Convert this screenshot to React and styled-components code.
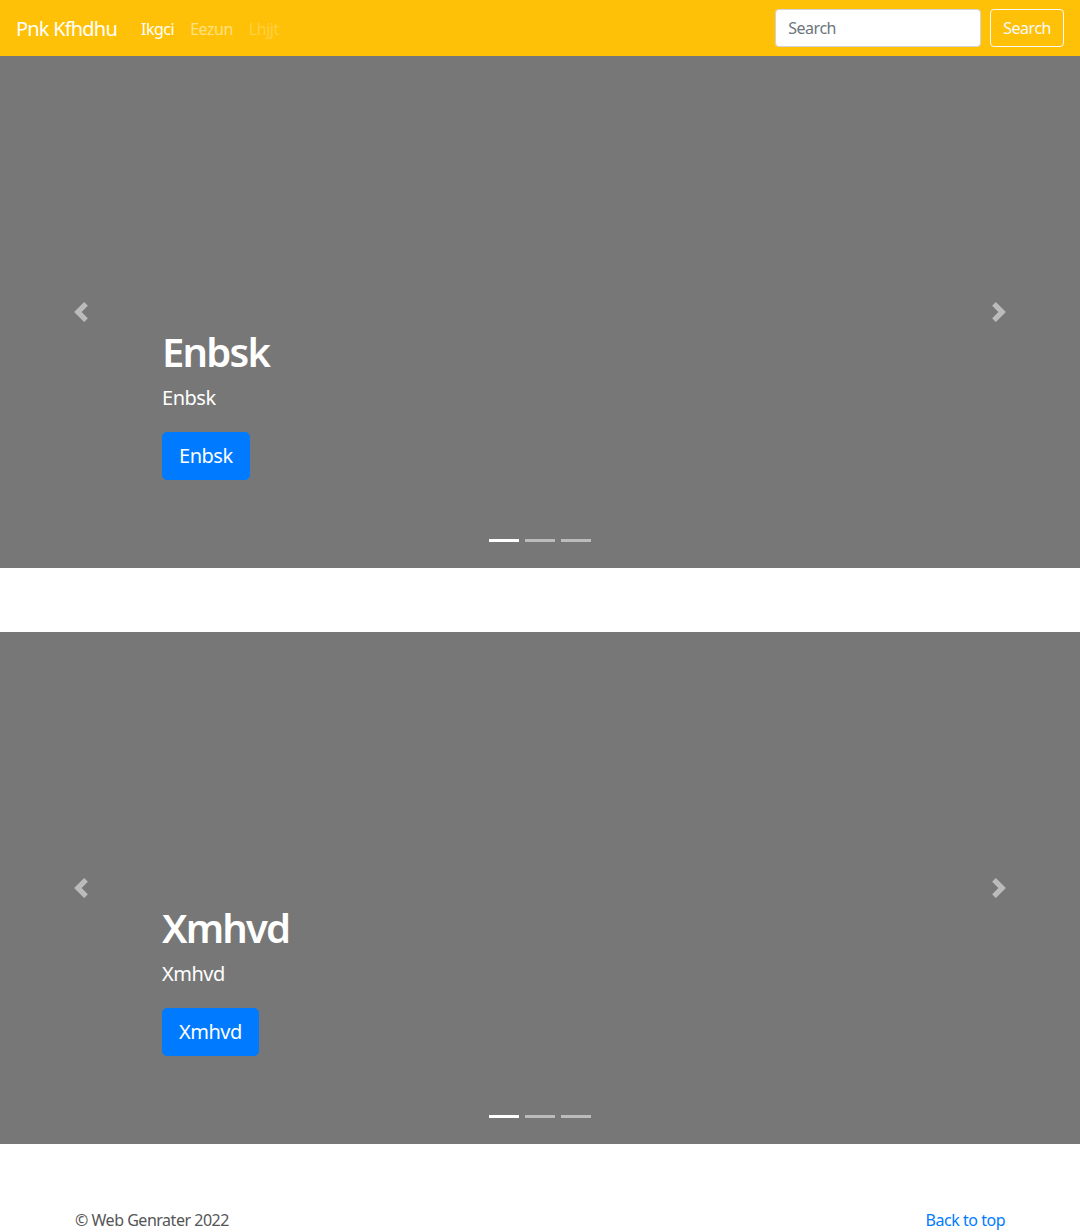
import styled, { createGlobalStyle } from "styled-components";

const GlobalStyle = createGlobalStyle`
  body {
    margin: 0;
    font-family: "Noto Sans", "Open Sans", sans-serif;
    font-size: 16px;
    line-height: 1.5;
    letter-spacing: -0.03em;
    color: #212529;
    background: #fff;
  }
  * { box-sizing: border-box; }
`;

const Navbar = styled.nav`
  height: 56px;
  display: flex;
  align-items: center;
  padding: 9px 16px 7px;
  background: #ffc107;
`;

const Brand = styled.a`
  font-size: 20px;
  line-height: 30px;
  letter-spacing: -0.04em;
  color: #fff;
  margin-right: 16px;
  text-decoration: none;
`;

const NavLinks = styled.ul`
  display: flex;
  list-style: none;
  margin: 0;
  padding: 0;
  flex: 1;
`;

const NavLink = styled.a`
  display: block;
  padding: 8px;
  font-size: 16px;
  text-decoration: none;
  color: ${(p) =>
    p.$state === "active"
      ? "#fff"
      : p.$state === "disabled"
      ? "rgba(255,255,255,.25)"
      : "rgba(255,255,255,.5)"};
`;

const SearchForm = styled.form`
  display: flex;
  align-items: center;
  gap: 9px;
  margin-top: -2px;
`;

const SearchInput = styled.input`
  width: 206px;
  height: 38px;
  padding: 6px 12px;
  font: inherit;
  font-size: 16px;
  letter-spacing: -0.03em;
  color: #495057;
  border: 1px solid #ced4da;
  border-radius: 4px;
  background: #fff;
  &::placeholder { color: #6c757d; }
`;

const OutlineButton = styled.button`
  height: 38px;
  padding: 6px 12px;
  font: inherit;
  font-size: 16px;
  letter-spacing: -0.03em;
  color: #f8f9fa;
  background: transparent;
  border: 1px solid #f8f9fa;
  border-radius: 4px;
`;

const Carousel = styled.section`
  height: 512px;
  margin-bottom: 64px;
  background: #777;
  display: grid;
  grid-template-columns: 15% 1fr 15%;
  grid-template-rows: 1fr auto;
`;

const Control = styled.a`
  grid-row: 1 / 3;
  grid-column: ${(p) => (p.$side === "prev" ? 1 : 3)};
  display: flex;
  align-items: center;
  justify-content: center;
  opacity: 0.5;
  svg { width: 20px; height: 20px; }
`;

const Caption = styled.div`
  grid-column: 2;
  grid-row: 1;
  align-self: end;
  color: #fff;
  margin-bottom: 59px;
  h1 {
    font-size: 40px;
    font-weight: 600;
    line-height: 1.2;
    letter-spacing: -0.045em;
    margin: 0 0 8px;
  }
  p {
    font-size: 20px;
    line-height: 1.4;
    margin: 0 0 20px;
  }
  p:last-child { margin: 0; }
`;

const LargeButton = styled.a`
  display: inline-block;
  padding: 8px 16px;
  font-size: 20px;
  line-height: 30px;
  color: #fff;
  background: #007bff;
  border: 1px solid #007bff;
  border-radius: 4.8px;
  text-decoration: none;
`;

const Indicators = styled.ol`
  grid-column: 2;
  grid-row: 2;
  display: flex;
  justify-content: center;
  gap: 6px;
  list-style: none;
  margin: 0;
  padding: 0 0 26px;
`;

const Indicator = styled.li`
  width: 30px;
  height: 3px;
  background: #fff;
  opacity: ${(p) => (p.$active ? 1 : 0.5)};
`;

const Footer = styled.footer`
  width: 960px;
  margin: 0 auto;
  padding: 0 15px;
  display: flex;
  justify-content: space-between;
  p { margin: 0 0 16px; color: #555; }
  a { color: #007bff; text-decoration: none; }
`;

const Prev = () => (
  <svg viewBox="0 0 8 8" fill="#fff">
    <path d="M5.25 0l-4 4 4 4 1.5-1.5-2.5-2.5 2.5-2.5-1.5-1.5z" />
  </svg>
);

const Next = () => (
  <svg viewBox="0 0 8 8" fill="#fff">
    <path d="M2.75 0l-1.5 1.5 2.5 2.5-2.5 2.5 1.5 1.5 4-4-4-4z" />
  </svg>
);

const slides = ["Enbsk", "Xmhvd"];

export default function App() {
  return (
    <>
      <GlobalStyle />
      <Navbar>
        <Brand href="#">Pnk Kfhdhu</Brand>
        <NavLinks>
          <li><NavLink $state="active" href="#">Ikgci</NavLink></li>
          <li><NavLink href="#">Eezun</NavLink></li>
          <li><NavLink $state="disabled" href="#">Lhjjt</NavLink></li>
        </NavLinks>
        <SearchForm onSubmit={(e) => e.preventDefault()}>
          <SearchInput placeholder="Search" />
          <OutlineButton>Search</OutlineButton>
        </SearchForm>
      </Navbar>

      {slides.map((t) => (
        <Carousel key={t}>
          <Control $side="prev" href="#"><Prev /></Control>
          <Caption>
            <h1>{t}</h1>
            <p>{t}</p>
            <p><LargeButton href="#">{t}</LargeButton></p>
          </Caption>
          <Indicators>
            <Indicator $active />
            <Indicator />
            <Indicator />
          </Indicators>
          <Control $side="next" href="#"><Next /></Control>
        </Carousel>
      ))}

      <Footer>
        <p>© Web Genrater 2022</p>
        <p><a href="#">Back to top</a></p>
      </Footer>
    </>
  );
}
